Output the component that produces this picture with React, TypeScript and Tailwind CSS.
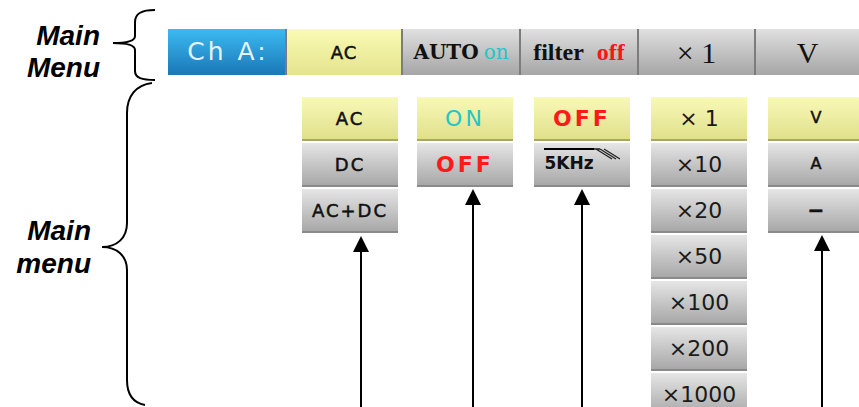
import React from 'react';

type ItemProps = {
    active?: boolean;
    className?: string;
    children: React.ReactNode;
};

// one entry of a drop-down list
const Item: React.FC<ItemProps> = ({ active, className = 'items-center', children }) => (
    <div
        className={`h-[44px] shrink-0 flex justify-center border-b-2 bg-linear-to-b ${className} ${
            active
                ? 'from-[#f9f9b8] to-[#e0e08c] border-[#a8a866]'
                : 'from-[#e6e6e6] to-[#a8a8a8] border-[#8a8a8a]'
        }`}
    >
        {children}
    </div>
);

const Arrow: React.FC<{ className: string }> = ({ className }) => (
    <div className={`flex flex-col items-center w-[16px] flex-1 ${className}`}>
        <svg width="16" height="16" viewBox="0 0 16 16" className="shrink-0">
            <polygon points="8,0 16,16 0,16" fill="black" />
        </svg>
        <div className="w-[2px] flex-1 bg-black" />
    </div>
);

const pixel = "font-['DejaVu_Sans',sans-serif]";
const heavy = '[-webkit-text-stroke:0.5px_#111]';
const label = "font-['Liberation_Sans',Arial,sans-serif] font-bold italic text-[28px] text-right text-black";

export default function App() {
    return (
        <div className="w-[859px] h-[407px] overflow-hidden bg-white flex flex-col">
            {/* Main menu bar */}
            <div className="flex h-[82px] shrink-0">
                <div className="w-[168px] shrink-0 flex">
                    <div className={`w-[100px] pt-[20px] leading-[32px] ${label}`}>
                        Main
                        <br />
                        Menu
                    </div>
                    <svg width="68" height="82" viewBox="0 0 68 82" fill="none" stroke="black" strokeWidth="2">
                        <path d="M55,10 C42,10 35,13 35,22 L35,36 C35,41 25,43 13,43 C25,43 35,45 35,50 L35,71 C35,78 42,80 55,80" />
                    </svg>
                </div>
                <div className="mt-[29px] h-[46px] flex-1 flex gap-[2px] bg-[#7c7c7c]">
                    <div className={`w-[117px] shrink-0 flex items-center justify-center pl-[3px] bg-linear-to-b from-[#3cbaf2] to-[#1a78b6] text-[25px] tracking-[3px] text-[#e6f3fc] ${pixel}`}>
                        Ch A:
                    </div>
                    <div className={`w-[114px] shrink-0 flex items-center justify-center bg-linear-to-b from-[#fafab4] to-[#e4e48e] text-[18px] tracking-[1px] text-[#111] ${heavy} ${pixel}`}>
                        AC
                    </div>
                    <div className="w-[116px] shrink-0 flex items-center justify-center gap-[5px] bg-linear-to-b from-[#e0e0e0] to-[#a6a6a6] font-['DejaVu_Serif',serif]">
                        <span className="font-bold text-[20px] text-[#111]">AUTO</span>
                        <span className="text-[20px] text-[#22c6c8]">on</span>
                    </div>
                    <div className="w-[116px] shrink-0 flex items-center justify-center gap-[13px] bg-linear-to-b from-[#e0e0e0] to-[#a6a6a6] font-['Liberation_Serif',serif] font-bold text-[24px]">
                        <span className="text-[#111]">filter</span>
                        <span className="text-[#ff1414]">off</span>
                    </div>
                    <div className="w-[115px] shrink-0 flex items-center justify-center bg-linear-to-b from-[#e0e0e0] to-[#a6a6a6] font-['Liberation_Serif',serif] text-[30px] text-[#111]">
                        × 1
                    </div>
                    <div className="flex-1 flex items-center justify-center bg-linear-to-b from-[#e0e0e0] to-[#a6a6a6] font-['Liberation_Serif',serif] text-[30px] text-[#111]">
                        V
                    </div>
                </div>
            </div>

            {/* Drop-down lists */}
            <div className="flex flex-1 min-h-0">
                <div className="w-[168px] shrink-0 flex">
                    <div className={`w-[91px] pt-[132px] leading-[33px] ${label}`}>
                        Main
                        <br />
                        menu
                    </div>
                    <svg width="77" height="325" viewBox="0 0 77 325" fill="none" stroke="black" strokeWidth="2">
                        <path d="M61,1 C45,3 36,14 36,31 L36,141 C36,156 26,165 11,165 C26,165 36,174 36,188 L36,298 C36,313 43,321 54,323" />
                    </svg>
                </div>

                <div className="flex pt-[15px] ml-[134px]">
                    <div className={`w-[96px] shrink-0 flex flex-col gap-[2px] text-[18px] tracking-[2px] text-[#111] ${heavy} ${pixel}`}>
                        <Item active>AC</Item>
                        <Item>DC</Item>
                        <Item>AC+DC</Item>
                        <Arrow className="ml-[51px] mt-[1px]" />
                    </div>

                    <div className={`w-[96px] ml-[19px] shrink-0 flex flex-col gap-[2px] text-[22px] tracking-[3px] ${pixel}`}>
                        <Item active>
                            <span className="text-[#22c6c8]">ON</span>
                        </Item>
                        <Item>
                            <span className="text-[#ff1a1a] font-bold">OFF</span>
                        </Item>
                        <Arrow className="ml-[48px]" />
                    </div>

                    <div className={`w-[96px] ml-[21px] shrink-0 flex flex-col gap-[2px] ${pixel}`}>
                        <Item active>
                            <span className="text-[22px] font-bold tracking-[3px] text-[#ff1a1a]">OFF</span>
                        </Item>
                        <Item className="items-start pt-[5px]">
                            <div className="flex items-start">
                                <span className="border-t-2 border-black text-[17px] leading-[18px] font-bold text-[#111] pt-[4px]">5KHz</span>
                                <svg width="26" height="14" viewBox="0 0 26 14" fill="none" stroke="#222" strokeWidth="1.3">
                                    <path d="M0,1 H6 M2,1 L18,11 M6,1 L22,11 M10,1 L26,11" />
                                </svg>
                            </div>
                        </Item>
                        <Arrow className="ml-[40px]" />
                    </div>

                    <div className={`w-[96px] ml-[21px] shrink-0 flex flex-col gap-[2px] text-[22px] text-[#1a1a1a] ${pixel}`}>
                        <Item active>× 1</Item>
                        <Item>×10</Item>
                        <Item>×20</Item>
                        <Item>×50</Item>
                        <Item>×100</Item>
                        <Item>×200</Item>
                        <Item>×1000</Item>
                    </div>

                    <div className={`w-[96px] ml-[21px] shrink-0 flex flex-col gap-[2px] text-[16px] text-[#111] ${heavy} ${pixel}`}>
                        <Item active>V</Item>
                        <Item>A</Item>
                        <Item>
                            <span className="text-[20px] font-bold">−</span>
                        </Item>
                        <Arrow className="ml-[46px]" />
                    </div>
                </div>
            </div>
        </div>
    );
}
